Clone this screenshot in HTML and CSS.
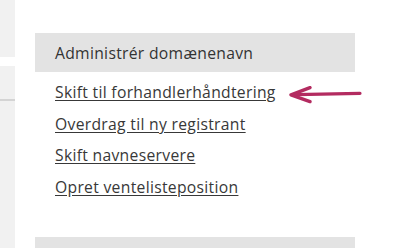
FILE: index.html
```html
<!DOCTYPE html>
<html lang="da">

<head>
    <meta charset="UTF-8">
    <meta name="viewport" content="width=device-width, initial-scale=1.0">
    <title>Administrér domænenavn</title>

    <link rel="stylesheet" href="styles.css">
</head>

<body>
    <div class="page">
        <div class="side-strip">
            <div class="side-block side-top"></div>
            <div class="side-block side-rest"></div>
        </div>

        <div class="main">
            <div class="panel">
                <h3 class="panel-title">Administrér domænenavn</h3>
                <ul class="panel-links">
                    <li class="highlight">
                        <a href="#">Skift til forhandlerhåndtering</a>
                        <svg class="arrow" width="76" height="18" viewBox="0 0 76 18">
                            <path d="M72 7.4 L8 8.6" stroke="#b32b60" stroke-width="3.2" stroke-linecap="round" fill="none" />
                            <path d="M22 1.6 L3 8.8 L22 15.6" stroke="#b32b60" stroke-width="3.4" stroke-linecap="round" stroke-linejoin="round" fill="none" />
                        </svg>
                    </li>
                    <li><a href="#">Overdrag til ny registrant</a></li>
                    <li><a href="#">Skift navneservere</a></li>
                    <li><a href="#">Opret ventelisteposition</a></li>
                </ul>
            </div>
            <div class="panel-next"></div>
        </div>
    </div>
</body>

</html>
```

FILE: styles.css
```css
* {
    box-sizing: border-box;
}

body {
    margin: 0;
    background-color: #fff;
    font-family: "Open Sans", "Noto Sans", sans-serif;
    color: #333;
    overflow: hidden;
}

.page {
    display: flex;
    height: 248px;
    overflow: hidden;
}

.side-strip {
    width: 15px;
    display: flex;
    flex-direction: column;
}

.side-block {
    background-color: #f1f1f1;
}

.side-top {
    height: 57px;
}

.side-rest {
    margin-top: 9px;
    flex: 1;
    background: linear-gradient(#f1f1f1 0 33px, #d4d4d4 33px 35px, #f1f1f1 35px);
}

.main {
    padding: 33px 0 0 20px;
    width: 340px;
}

.panel-title {
    margin: 0;
    height: 39px;
    padding: 9px 0 0 20px;
    background-color: #e3e3e3;
    font-size: 15.7px;
    font-weight: normal;
    letter-spacing: 0.3px;
    color: #333;
}

.panel-links {
    list-style: none;
    margin: 0;
    padding: 9px 0 0 20px;
}

.panel-links li {
    height: 31.5px;
    font-size: 15.7px;
    letter-spacing: 0.3px;
}

.panel-links a {
    color: #383838;
    text-decoration: underline;
    text-underline-offset: 2px;
}

.highlight {
    position: relative;
}

.arrow {
    position: absolute;
    left: 233px;
    top: 5px;
}

.panel-next {
    margin-top: 30px;
    height: 11px;
    background-color: #e3e3e3;
}
```
